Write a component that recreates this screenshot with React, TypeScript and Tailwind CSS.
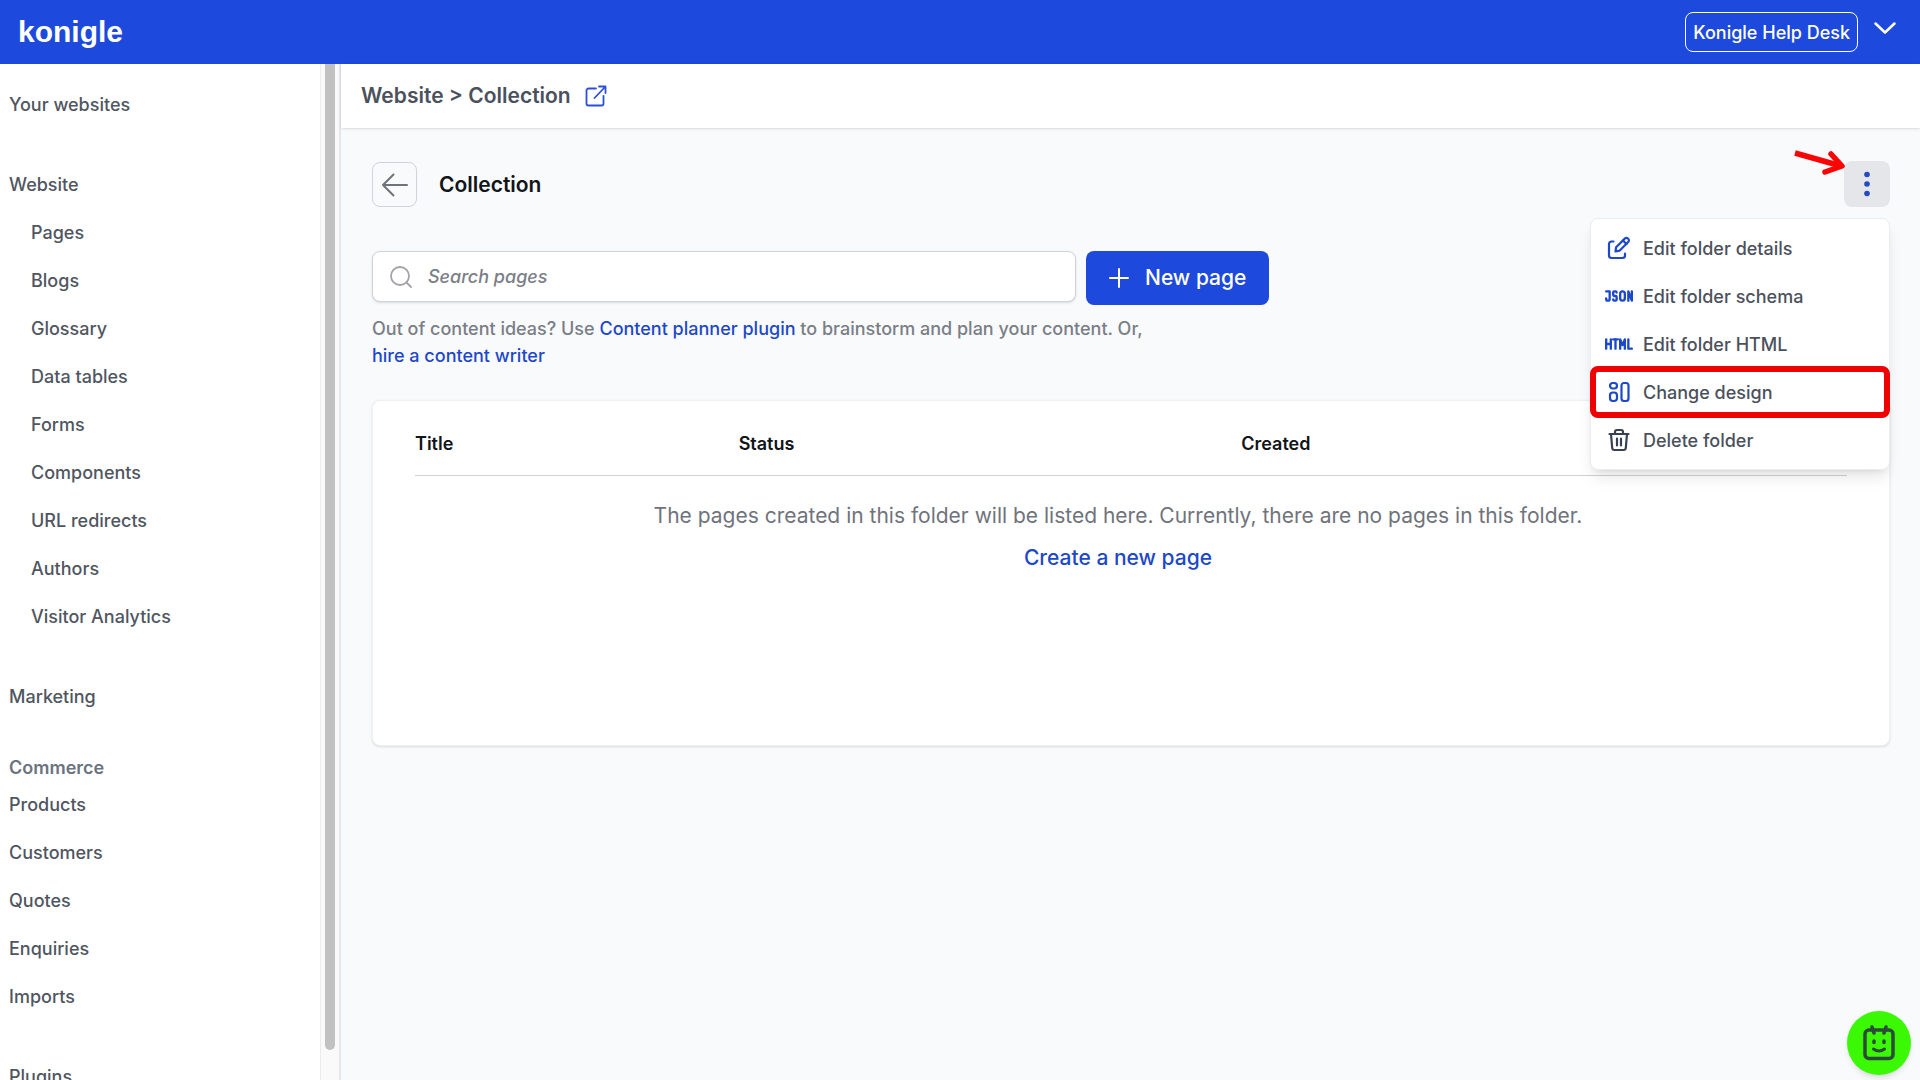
import React from "react";
import { TbHtml, TbJson } from "react-icons/tb";

const websiteLinks = [
  "Pages",
  "Blogs",
  "Glossary",
  "Data tables",
  "Forms",
  "Components",
  "URL redirects",
  "Authors",
  "Visitor Analytics",
];

const commerceLinks = ["Products", "Customers", "Quotes", "Enquiries", "Imports"];

const EditIcon = () => (
  <svg className="size-6" viewBox="0 0 24 24" fill="none" stroke="currentColor" strokeWidth="2.2" strokeLinecap="round" strokeLinejoin="round">
    <path d="M6.500 5.500H4.500A2.500 2.500 0 0 0 2 8v11.500A2.500 2.500 0 0 0 4.500 22H15.500A2.500 2.500 0 0 0 18 19.500v-2" />
    <path d="M8.500 15.500l.6-4.200 8.700-8.700a2.200 2.200 0 0 1 3.200 0l.2.200a2.200 2.200 0 0 1 0 3.200l-8.700 8.700z" />
    <path d="M16 4.500l3.500 3.500" />
  </svg>
);

const DesignIcon = () => (
  <svg className="size-6" viewBox="0 0 24 24" fill="none" stroke="currentColor" strokeWidth="2.2">
    <rect x="3" y="3" width="7" height="5.500" rx="2.700" />
    <rect x="3" y="12.500" width="7" height="8.500" rx="3" />
    <rect x="14.500" y="3" width="7" height="18" rx="2.500" />
  </svg>
);

const TrashIcon = () => (
  <svg className="size-6" viewBox="0 0 24 24" fill="none" stroke="currentColor" strokeWidth="2.2" strokeLinecap="round" strokeLinejoin="round">
    <path d="M2.500 6h19" />
    <path d="M8 6V4a2 2 0 0 1 2-2h4a2 2 0 0 1 2 2v2" />
    <path d="M4 6l1.200 14a2.200 2.200 0 0 0 2.200 2h9.200a2.200 2.200 0 0 0 2.200-2L20 6" />
    <path d="M10 10.500v7M14 10.500v7" />
  </svg>
);

const menuItems = [
  { label: "Edit folder details", icon: <EditIcon /> },
  { label: "Edit folder schema", icon: <TbJson size={28} /> },
  { label: "Edit folder HTML", icon: <TbHtml size={28} /> },
  { label: "Change design", icon: <DesignIcon />, highlighted: true },
  { label: "Delete folder", icon: <TrashIcon />, dark: true },
];

const NavLink = ({ label, nested = false }: { label: string; nested?: boolean }) => (
  <a href="#" className={nested ? "flex h-12 items-center pl-[31px]" : "flex h-12 items-center pl-[9px]"}>
    {label}
  </a>
);

const Header = () => (
  <header className="flex h-16 shrink-0 items-center justify-between bg-[#1d4adc] pl-[18px] pr-6 text-white">
    <a href="#" className="font-['Liberation_Sans',sans-serif] text-[30px] font-bold leading-none">
      konigle
    </a>
    <div className="flex items-center gap-4">
      <button className="h-10 rounded-lg border border-white px-[7px] text-[18px] font-medium">Konigle Help Desk</button>
      <button aria-label="Account menu" className="pb-2">
        <svg className="h-3 w-[22px]" viewBox="0 0 22 12" fill="none" stroke="currentColor" strokeWidth="2.500" strokeLinecap="round" strokeLinejoin="round">
          <path d="M1.500 1.500l9.500 9 9.500-9" />
        </svg>
      </button>
    </div>
  </header>
);

const Sidebar = () => (
  <aside className="flex w-[341px] shrink-0 border-r-2 border-[#e5e6e9] bg-white">
    <nav className="flex-1 overflow-hidden pt-4 text-[18px] font-medium text-[#50565f]">
      <NavLink label="Your websites" />
      <div className="mt-8">
        <NavLink label="Website" />
        {websiteLinks.map((label) => (
          <NavLink key={label} label={label} nested />
        ))}
      </div>
      <div className="mt-8">
        <NavLink label="Marketing" />
      </div>
      <h2 className="mt-9 pl-[9px] font-semibold leading-6 text-[#6b7280]">Commerce</h2>
      {commerceLinks.map((label) => (
        <NavLink key={label} label={label} />
      ))}
      <div className="mt-8">
        <NavLink label="Plugins" />
      </div>
    </nav>
    <div className="w-[19px] border-l border-[#ececec] bg-[#fafafa] px-1">
      <div className="h-[97%] rounded-b-full bg-[#c1c1c1]" />
    </div>
  </aside>
);

const FolderMenu = () => (
  <ul className="absolute right-0 top-[57px] z-10 w-[300px] rounded-lg border border-[#ebecee] bg-white py-[5px] text-[18px] font-medium text-[#4b515c] shadow-lg">
    {menuItems.map((item) => (
      <li key={item.label} className="relative">
        <button className="flex h-12 w-full items-center gap-2 pl-3 text-left">
          <span className={item.dark ? "flex w-8 justify-center text-[#374151]" : "flex w-8 justify-center text-[#1d48c9]"}>
            {item.icon}
          </span>
          {item.label}
        </button>
        {item.highlighted && (
          <span className="pointer-events-none absolute -inset-x-px -inset-y-[2px] rounded-lg border-[6px] border-[#ee0202]" />
        )}
      </li>
    ))}
  </ul>
);

const Toolbar = () => (
  <div className="relative flex items-end justify-between">
    <div className="flex items-center gap-[22px]">
      <button aria-label="Back" className="flex size-[45px] items-center justify-center rounded-lg border border-[#d1d3d8] text-[#6f737b]">
        <svg className="size-7" viewBox="0 0 28 28" fill="none" stroke="currentColor" strokeWidth="2" strokeLinecap="round" strokeLinejoin="round">
          <path d="M26 14H2M12.500 3.500L2 14l10.500 10.500" />
        </svg>
      </button>
      <h1 className="text-[21px] font-semibold text-[#111419]">Collection</h1>
    </div>
    <button aria-label="Folder actions" className="flex size-[46px] items-center justify-center rounded-lg bg-[#e5e6e9] text-[#2549bf]">
      <svg className="size-7" viewBox="0 0 28 28" fill="currentColor">
        <circle cx="14" cy="4.500" r="2.800" />
        <circle cx="14" cy="14" r="2.800" />
        <circle cx="14" cy="23.500" r="2.800" />
      </svg>
    </button>
    <svg className="pointer-events-none absolute -top-3 right-[43px] h-7 w-[54px]" viewBox="0 0 54 28" fill="none" stroke="#f80606" strokeWidth="5.500" strokeLinejoin="round">
      <path d="M2 4l46 13" />
      <path d="M38 5l11 12-17 6" strokeLinecap="round" />
    </svg>
    <FolderMenu />
  </div>
);

const PagesTable = () => (
  <section className="mt-[31px] min-h-[346px] rounded-lg border border-[#f0f1f3] bg-white px-[42px] pt-[11px] shadow-sm">
    <table className="w-full table-fixed text-left">
      <thead className="border-b border-[#cfd1d4] text-[18px] text-[#111419]">
        <tr className="h-[63px]">
          <th className="w-[22.6%] font-semibold">Title</th>
          <th className="w-[35.1%] font-semibold">Status</th>
          <th className="font-semibold">Created</th>
        </tr>
      </thead>
      <tbody>
        <tr>
          <td colSpan={3} className="pr-[26px] pt-[19px] text-center text-[21px] leading-[42px] text-[#6f737b]">
            <p>The pages created in this folder will be listed here. Currently, there are no pages in this folder.</p>
            <a href="#" className="font-medium text-[#1d48c9]">Create a new page</a>
          </td>
        </tr>
      </tbody>
    </table>
  </section>
);

const App = () => {
  return (
    <div className="flex h-screen flex-col overflow-hidden bg-[#f9fafc] font-['Inter',sans-serif]">
      <Header />
      <div className="flex min-h-0 flex-1">
        <Sidebar />
        <main className="min-w-0 flex-1">
          <div className="flex h-16 items-center gap-[14px] bg-white pl-5 text-[21px] font-semibold text-[#4b515c] shadow-sm">
            <span>Website &gt; Collection</span>
            <a href="#" aria-label="Open website" className="text-[#2c50d8]">
              <svg className="size-[22px]" viewBox="0 0 22 22" fill="none" stroke="currentColor" strokeWidth="1.800" strokeLinecap="round" strokeLinejoin="round">
                <path d="M11 3.500H3.500A2 2 0 0 0 1.500 5.500v13a2 2 0 0 0 2 2h13a2 2 0 0 0 2-2V11" />
                <path d="M14 1.500h6.500V8M20 2L9.500 13" />
              </svg>
            </a>
          </div>

          <div className="pl-[31px] pr-[30px] pt-[33px]">
            <Toolbar />

            <div className="mt-11 flex items-start gap-[10px]">
              <label className="flex h-[51px] w-[704px] items-center gap-4 rounded-lg border border-[#d1d3d8] bg-white pl-[17px] shadow-sm">
                <svg className="size-[22px] text-[#a0a3a8]" viewBox="0 0 22 22" fill="none" stroke="currentColor" strokeWidth="1.800" strokeLinecap="round">
                  <circle cx="10" cy="10" r="9" />
                  <path d="M16.500 16.500L21 21" />
                </svg>
                <input
                  type="search"
                  aria-label="Search pages"
                  placeholder="Search pages"
                  className="min-w-0 flex-1 text-[18px] font-medium italic outline-none placeholder:text-[#7a7e86]"
                />
              </label>
              <button className="flex h-[54px] items-center gap-4 rounded-lg bg-[#1d4adc] px-[23px] text-[21px] font-medium text-white">
                <svg className="size-5" viewBox="0 0 20 20" fill="none" stroke="currentColor" strokeWidth="2" strokeLinecap="round">
                  <path d="M10 1v18M1 10h18" />
                </svg>
                New page
              </button>
            </div>

            <p className="mt-[10px] max-w-[820px] text-[18px] font-medium leading-[27px] text-[#7a7e86]">
              Out of content ideas? Use <a href="#" className="text-[#1d48c9]">Content planner plugin</a> to brainstorm and plan your content. Or,
              <br />
              <a href="#" className="text-[#1d48c9]">hire a content writer</a>
            </p>

            <PagesTable />
          </div>
        </main>
      </div>

      <button aria-label="Open chat" className="fixed bottom-[5px] right-[9px] flex size-16 items-center justify-center rounded-full bg-[#3bf904] text-[#2c4a39] shadow-md">
        <svg className="h-9 w-8" viewBox="0 0 32 36" fill="none" stroke="currentColor" strokeWidth="3.500" strokeLinecap="round" strokeLinejoin="round">
          <rect x="2" y="5" width="28" height="28.500" rx="4" />
          <path d="M9 2l2 6M23 2l-2 6" />
          <path d="M11 16v1.500M21 16v1.500" />
          <path d="M10.500 24q5.500 4 11 0" strokeWidth="3" />
        </svg>
      </button>
    </div>
  );
};

export default App;
